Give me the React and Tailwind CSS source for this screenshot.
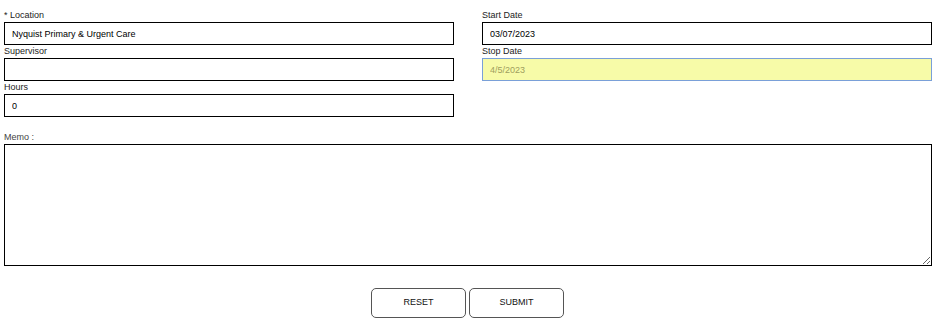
import React from "react";

function Field({ label, value, variant }) {
  const base =
    "block w-full h-[23px] px-[7px] text-[9px] outline-none box-border";
  const cls =
    variant === "stop"
      ? base + " border border-[#7aa0d8] bg-[#f7fba8] text-[#9e9e5e]"
      : base + " border border-black bg-white text-black";
  return (
    <div className="flex flex-col">
      <label className="block h-[13px] text-[9px] leading-[13px] text-[#222]">
        {label}
      </label>
      <input type="text" defaultValue={value} className={cls} />
    </div>
  );
}

export default function App() {
  return (
    <div
      className="w-[936px] h-[326px] bg-white"
      style={{ fontFamily: '"Liberation Sans", Arial, sans-serif' }}
    >
      <div className="flex gap-[28px] px-[4px] pt-[9px]">
        <div className="flex-1 flex flex-col">
          <Field label="* Location" value="Nyquist Primary & Urgent Care" />
          <Field label="Supervisor" value="" />
          <Field label="Hours" value="0" />
        </div>
        <div className="flex-1 flex flex-col">
          <Field label="Start Date" value="03/07/2023" />
          <Field label="Stop Date" value="4/5/2023" variant="stop" />
        </div>
      </div>
      <div className="px-[4px] mt-[14px]">
        <label className="block h-[13px] text-[9px] leading-[13px] text-[#444]">
          Memo :
        </label>
        <textarea className="block w-full h-[122px] border border-black bg-white text-[9px] outline-none p-[4px]" />
      </div>
      <div className="flex justify-center gap-[3px] mt-[22px] pr-[1px]">
        <button className="w-[95px] h-[30px] border border-[#555] rounded-[5px] bg-white text-[9px] text-[#111]">
          RESET
        </button>
        <button className="w-[95px] h-[30px] border border-[#555] rounded-[5px] bg-white text-[9px] text-[#111]">
          SUBMIT
        </button>
      </div>
    </div>
  );
}
